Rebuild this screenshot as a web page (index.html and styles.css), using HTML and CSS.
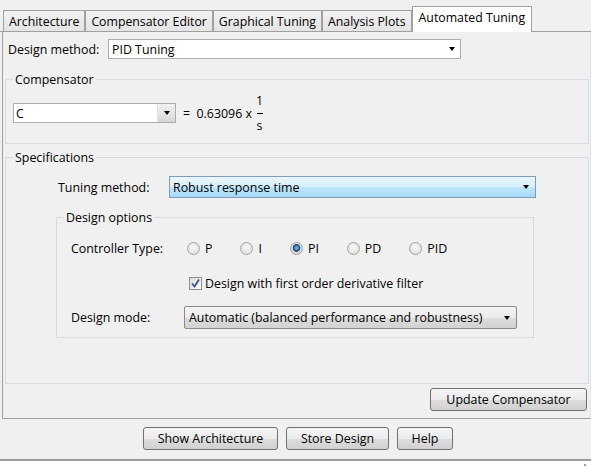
FILE: index.html
```html
<!DOCTYPE html>
<html lang="en">
<head>
    <meta charset="UTF-8">
    <title>Automated Tuning</title>
    <link rel="stylesheet" href="styles.css">
</head>
<body>
    <div class="tabs">
        <div class="tab">Architecture</div>
        <div class="tab">Compensator Editor</div>
        <div class="tab">Graphical Tuning</div>
        <div class="tab">Analysis Plots</div>
        <div class="tab active">Automated Tuning</div>
    </div>

    <div class="panel">
        <div class="row method-row">
            <label>Design method:</label>
            <div class="combo combo-method">PID Tuning<span class="arrow"></span></div>
        </div>

        <fieldset class="group comp-group">
            <legend>Compensator</legend>
            <div class="row comp-row">
                <div class="combo combo-c">C<span class="combo-btn"><span class="arrow"></span></span></div>
                <span class="eq">=&nbsp; 0.63096 x</span>
                <span class="frac"><span>1</span><span class="bar"></span><span>s</span></span>
            </div>
        </fieldset>

        <fieldset class="group spec-group">
            <legend>Specifications</legend>
            <div class="row tuning-row">
                <label>Tuning method:</label>
                <div class="combo combo-blue">Robust response time<span class="arrow"></span></div>
            </div>

            <fieldset class="group options">
                <legend>Design options</legend>
                <div class="row ctrl-row">
                    <label>Controller Type:</label>
                    <span class="radio"><span class="dot"></span>P</span>
                    <span class="radio"><span class="dot"></span>I</span>
                    <span class="radio"><span class="dot checked"></span>PI</span>
                    <span class="radio"><span class="dot"></span>PD</span>
                    <span class="radio"><span class="dot"></span>PID</span>
                </div>
                <div class="row check-row">
                    <span class="check">
                        <svg width="11" height="11" viewBox="0 0 11 11"><path d="M2 5.5 L4.5 8.5 L9 1.5" fill="none" stroke="#3b4f8f" stroke-width="1.8"/></svg>
                    </span>
                    Design with first order derivative filter
                </div>
                <div class="row mode-row">
                    <label>Design mode:</label>
                    <div class="combo combo-gray">Automatic (balanced performance and robustness)<span class="arrow"></span></div>
                </div>
            </fieldset>
        </fieldset>

        <div class="update-row">
            <button class="btn btn-update">Update Compensator</button>
        </div>
    </div>

    <div class="footer">
        <button class="btn btn-arch">Show Architecture</button>
        <button class="btn btn-store">Store Design</button>
        <button class="btn btn-help">Help</button>
    </div>

    <div class="status"><span class="grip"></span></div>
</body>
</html>
```

FILE: styles.css
```css
body {
    margin: 0;
    width: 591px;
    height: 469px;
    overflow: hidden;
    background: #f0f0f0;
    font-family: "Open Sans", "Noto Sans", sans-serif;
    font-size: 12.4px;
    color: #000;
}

/* tab strip */
.tabs {
    display: flex;
    align-items: flex-end;
    height: 31px;
    padding-left: 3px;
    border-bottom: 1px solid #a0a0a0;
}
.tab {
    height: 21px;
    box-sizing: border-box;
    padding: 0 5px;
    display: flex;
    align-items: center;
    font-size: 12.3px;
    border: 1px solid #a0a0a0;
    border-bottom: none;
    background: linear-gradient(#f2f2f2, #e4e4e4);
}
.tab.active {
    position: relative;
    height: 26px;
    margin-bottom: -1px;
    padding: 0 6px 4px;
    background: #fff;
}

/* main panel */
.panel {
    margin-left: 2px;
    width: 587px;
    border-left: 1px solid #a0a0a0;
    border-right: 1px solid #dbe6f2;
    border-bottom: 1px solid #a0a0a0;
    padding: 7px 0;
}
.row {
    display: flex;
    align-items: center;
}
.method-row {
    height: 20px;
    padding-left: 5px;
}
.method-row label { width: 100px; }

.combo {
    box-sizing: border-box;
    display: flex;
    align-items: center;
    border: 1px solid #abadb3;
    background: #fff;
    padding-left: 3px;
}
.arrow {
    margin-left: auto;
    width: 0;
    height: 0;
    border-left: 3.5px solid transparent;
    border-right: 3.5px solid transparent;
    border-top: 4px solid #000;
}
.combo-method {
    width: 353px;
    height: 20px;
    padding-right: 5px;
}

/* group boxes */
.group {
    margin: 0;
    border: 1px solid #d5dbe0;
    min-width: 0;
}
.group legend {
    padding: 0 2px;
    line-height: 15px;
}
.comp-group {
    margin: 13px 1px 0 2px;
    padding: 16px 0 20px 7px;
}
.comp-row { height: 20px; }
.combo-c {
    width: 163px;
    height: 20px;
    padding-left: 2px;
}
.combo-btn {
    margin-left: auto;
    width: 17px;
    height: 18px;
    display: flex;
    align-items: center;
    justify-content: center;
    background: linear-gradient(#f2f2f2, #d6d6d6);
    border-left: 1px solid #e2e2e2;
}
.combo-btn .arrow { margin-left: 0; }
.eq { margin-left: 7px; }
.frac {
    display: inline-flex;
    flex-direction: column;
    align-items: center;
    margin-left: 4px;
    line-height: 13px;
}
.frac .bar {
    width: 6px;
    height: 1px;
    background: #000;
    margin: 6px 0 5px;
}

.spec-group {
    margin: 6px 1px 0 2px;
    padding: 11px 0 45px 7px;
}
.tuning-row {
    height: 22px;
    padding-left: 45px;
}
.tuning-row label { width: 111px; }
.combo-blue {
    width: 367px;
    height: 22px;
    padding-right: 6px;
    border-color: #7f9db9;
    background: linear-gradient(#eaf6fd, #d7effc 50%, #bee6fd 51%, #a7d9f5);
}

.options {
    box-sizing: border-box;
    width: 478px;
    margin: 12px 0 0 43px;
    padding: 13px 0 8px 7px;
}
.ctrl-row {
    height: 20px;
    padding-left: 7px;
}
.ctrl-row label { width: 116px; }
.radio {
    display: flex;
    align-items: center;
    gap: 5px;
    margin-right: 28px;
}
.dot {
    width: 13px;
    height: 13px;
    box-sizing: border-box;
    border-radius: 50%;
    border: 1px solid #a2a2a2;
    background: radial-gradient(circle at 50% 40%, #fafafa, #d8d8d8);
}
.dot.checked {
    background: radial-gradient(circle at 50% 45%, #8fc4ec 0, #3e7bb0 2px, #1f4d78 3.6px, #e6e6e6 4.2px, #d0d0d0 6px);
}
.check-row {
    height: 20px;
    margin-top: 15px;
    padding-left: 125px;
}
.check {
    width: 13px;
    height: 13px;
    box-sizing: border-box;
    border: 1px solid #8e8f8f;
    background: linear-gradient(135deg, #dcdcdc, #fafafa);
    margin-right: 3px;
    display: flex;
}
.mode-row {
    height: 23px;
    margin-top: 13px;
    padding-left: 7px;
}
.mode-row label { width: 113px; }
.combo-gray {
    width: 333px;
    height: 23px;
    padding-left: 4px;
    padding-right: 6px;
    border-color: #8a8a8a;
    border-radius: 2px;
    background: linear-gradient(#f4f4f4, #ebebeb 50%, #dedede 51%, #d2d2d2);
}

/* buttons */
.btn {
    height: 23px;
    box-sizing: border-box;
    padding: 0;
    font: inherit;
    color: #000;
    border: 1px solid #707070;
    border-radius: 3px;
    background: linear-gradient(#f4f4f4, #ebebeb 50%, #dddddd 51%, #d1d1d1);
}
.update-row {
    display: flex;
    justify-content: flex-end;
    margin-top: 4px;
    padding-right: 3px;
}
.btn-update { width: 157px; }

.footer {
    display: flex;
    gap: 8px;
    margin-top: 8px;
    padding-left: 143px;
}
.btn-arch { width: 135px; }
.btn-store { width: 103px; }
.btn-help { width: 56px; }

.status {
    margin-top: 9px;
    height: 20px;
    background: #fff;
    border-top: 2px solid #9a9a9a;
    display: flex;
    justify-content: flex-end;
    align-items: flex-start;
}
.grip {
    width: 2px;
    height: 2px;
    background: #a0a0a0;
    margin: 3px 5px 0 0;
}
```
